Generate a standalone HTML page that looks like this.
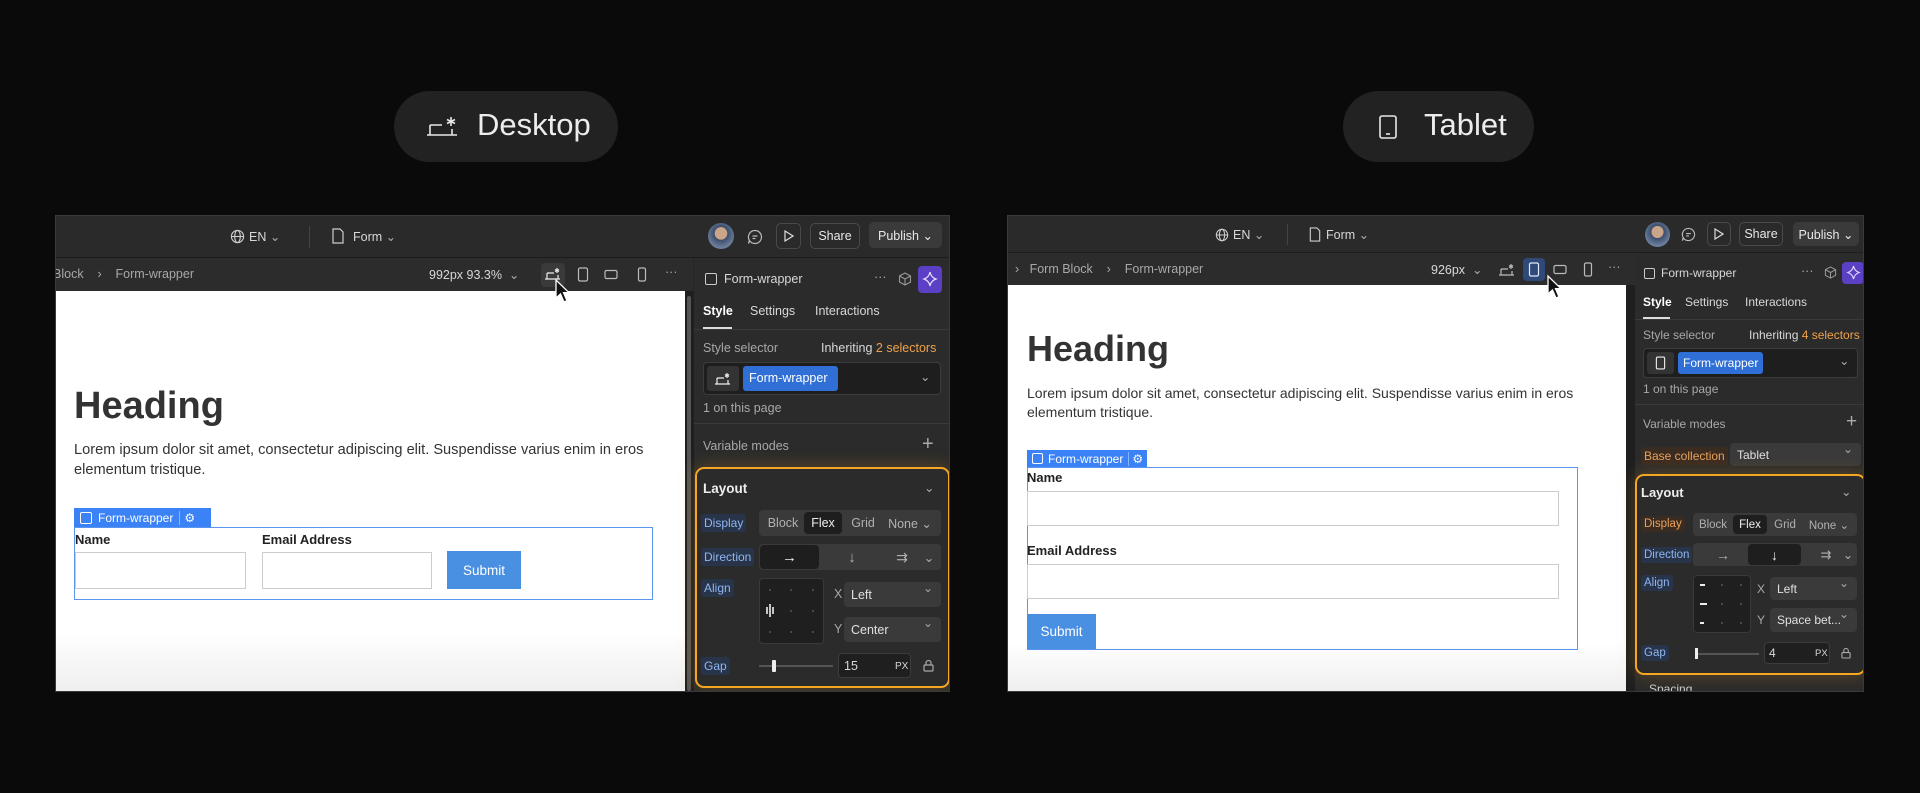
<!DOCTYPE html>
<html><head><meta charset="utf-8"><style>
*{margin:0;padding:0;box-sizing:border-box}
body{width:1920px;height:793px;background:#0a0a0a;position:relative;overflow:hidden;font-family:"Liberation Sans",sans-serif;color:#d6d6d6}
.a{position:absolute}
.pill{position:absolute;background:#222;border-radius:36px;color:#ececec;font-size:31px;display:flex;align-items:center}
.win{position:absolute;background:#262626;border:1px solid #3a3a3a;overflow:hidden}
.bar1{position:absolute;left:0;right:0;top:0;background:#2a2a2a;border-bottom:1px solid #1c1c1c}
.bar2{position:absolute;left:0;background:#2c2c2c}
.t{position:absolute;font-size:12.5px;color:#d8d8d8;white-space:nowrap}
.g{color:#a8a8a8}
.btn{position:absolute;border:1px solid #4a4a4a;border-radius:5px;background:#2a2a2a;font-size:12.5px;color:#e8e8e8;display:flex;align-items:center;justify-content:center}
.canvas{position:absolute;background:#fff;overflow:hidden}
.panel{position:absolute;background:#2b2b2b}
.lbl{position:absolute;font-size:12px;padding:2px 3px;border-radius:3px;background:#28344a;color:#8fb6ee}
.lblo{background:#3b2c22;color:#e9a15a}
.seg{position:absolute;background:#3a3a3a;border-radius:4px;font-size:12.5px;color:#b0b0b0}
.seg span{position:absolute;top:0;bottom:0;display:flex;align-items:center;justify-content:center}
.act{background:#1e1e1e;border-radius:4px;color:#eee}
.sel{position:absolute;background:#3a3a3a;border-radius:4px;font-size:12.5px;color:#e0e0e0;padding-left:7px;display:flex;align-items:center}
.sel:after{content:"⌄";position:absolute;right:8px;top:-1px;color:#aaa;font-size:12px}
.orange{position:absolute;border:2px solid #f5a623;border-radius:9px;box-shadow:0 0 18px rgba(245,166,35,.25)}
.grid9{position:absolute;background:#1f1f1f;border:1px solid #3a3a3a;border-radius:4px}
.inp{position:absolute;border:1px solid #ccc;background:#fff}
.sub{position:absolute;background:#4a90e2;color:#fff;font-size:13.5px;display:flex;align-items:center;justify-content:center}
.fl{position:absolute;font-size:13px;font-weight:bold;color:#222}
.tag{position:absolute;background:#3b82f6;color:#fff;font-size:12px;display:flex;align-items:center}
svg{position:absolute}
</style></head><body>

<div class="pill" style="left:394px;top:91px;width:224px;height:71px">
<svg style="left:32px;top:24px" width="34" height="24" viewBox="0 0 34 24" fill="none" stroke="#e8e8e8" stroke-width="1.6"><path d="M4 10h12M4 10v10M1 20h30M26 20v-6"/><path d="M25 2v9M21 4.5l8 4M29 4.5l-8 4"/></svg>
<span style="position:absolute;left:83px;top:16px">Desktop</span></div>
<div class="pill" style="left:1343px;top:91px;width:191px;height:71px">
<svg style="left:35px;top:24px" width="20" height="24" viewBox="0 0 20 24" fill="none" stroke="#e8e8e8" stroke-width="1.6"><rect x="2" y="1" width="16" height="22" rx="2"/><path d="M8 19h4"/></svg>
<span style="position:absolute;left:81px;top:16px">Tablet</span></div>

<!-- Desktop window -->
<div class="win" style="left:55px;top:215px;width:895px;height:477px">
 <div class="bar1" style="height:42px"></div>
 <svg style="left:174px;top:13px" width="15" height="15" viewBox="0 0 16 16" fill="none" stroke="#ccc" stroke-width="1.2"><circle cx="8" cy="8" r="6.5"/><ellipse cx="8" cy="8" rx="3" ry="6.5"/><path d="M1.5 8h13"/></svg>
 <div class="t" style="left:193px;top:13px">EN <span class="g">⌄</span></div>
 <div class="a" style="left:253px;top:10px;width:1px;height:22px;background:#444"></div>
 <svg style="left:276px;top:12px" width="12" height="16" viewBox="0 0 12 16" fill="none" stroke="#ccc" stroke-width="1.2"><path d="M1 1h7l3 3v11H1z"/></svg>
 <div class="t" style="left:297px;top:13px">Form <span class="g">⌄</span></div>
 <div class="a" style="left:652px;top:7px;width:26px;height:26px;border-radius:50%;background:radial-gradient(circle at 50% 40%,#c9a58a 0 30%,#3b4d6a 32%,#6c7f9c 70%)"></div>
 <svg style="left:691px;top:13px" width="16" height="16" viewBox="0 0 16 16" fill="none" stroke="#bbb" stroke-width="1.2"><path d="M8 1.5a6.5 6.5 0 1 1-5.3 10.3L1.5 14.5l.8-3.3A6.5 6.5 0 0 1 8 1.5z"/><path d="M5.5 7h5M5.5 9.5h3"/></svg>
 <div class="btn" style="left:720px;top:7px;width:25px;height:26px"><svg style="position:static" width="10" height="12" viewBox="0 0 10 12" fill="none" stroke="#ddd" stroke-width="1.2"><path d="M1 1l8 5-8 5z"/></svg></div>
 <div class="btn" style="left:754px;top:7px;width:50px;height:26px">Share</div>
 <div class="btn" style="left:813px;top:6px;width:73px;height:26px;background:#3a3a3a;border-color:#3a3a3a">Publish ⌄</div>
 <div class="bar2" style="top:42px;width:637px;height:33px"></div>
 <div class="t g" style="left:-3px;top:51px">Block &nbsp;&nbsp;&nbsp;›&nbsp;&nbsp;&nbsp; Form-wrapper</div>
 <div class="t" style="left:373px;top:51px">992px 93.3% <span class="g">&nbsp;⌄</span></div>
 <div class="a" style="left:485px;top:47px;width:24px;height:24px;background:#3a3a3a;border-radius:4px"></div>
 <svg style="left:488px;top:51px" width="18" height="14" viewBox="0 0 18 14" fill="none" stroke="#eee" stroke-width="1.2"><path d="M3 6h7M3 6v6M1 12h15M14 12V8"/><path d="M13 1v5M11 2.5l4 2M15 2.5l-4 2"/></svg>
 <svg style="left:521px;top:51px" width="12" height="15" viewBox="0 0 12 15" fill="none" stroke="#bbb" stroke-width="1.2"><rect x="1.5" y="1" width="9" height="13" rx="1.5"/></svg>
 <svg style="left:548px;top:53px" width="14" height="11" viewBox="0 0 14 11" fill="none" stroke="#bbb" stroke-width="1.2"><rect x="1" y="1.5" width="12" height="8" rx="1.5"/></svg>
 <svg style="left:581px;top:51px" width="10" height="15" viewBox="0 0 10 15" fill="none" stroke="#bbb" stroke-width="1.2"><rect x="1.5" y="1" width="7" height="13" rx="1.5"/></svg>
 <div class="t g" style="left:609px;top:49px">···</div>
 <div class="canvas" style="left:0;top:75px;width:629px;height:402px;background:linear-gradient(#fff 85%,#eee)">
  <div class="a" style="left:18px;top:94px;font-size:38px;font-weight:bold;color:#333">Heading</div>
  <div class="a" style="left:18px;top:149px;width:590px;font-size:14.6px;line-height:20px;color:#333">Lorem ipsum dolor sit amet, consectetur adipiscing elit. Suspendisse varius enim in eros elementum tristique.</div>
  <div class="tag" style="left:18px;top:217px;width:137px;height:19px"><span style="display:inline-block;width:12px;height:12px;border:1.3px solid #fff;border-radius:2px;margin:0 6px 0 6px"></span>Form-wrapper<span style="border-left:1px solid #8ab4ff;margin-left:6px;padding-left:4px">⚙</span></div>
  <div class="a" style="left:18px;top:236px;width:579px;height:73px;border:1.5px solid #5b95f0"></div>
  <div class="fl" style="left:19px;top:241px">Name</div>
  <div class="fl" style="left:206px;top:241px">Email Address</div>
  <div class="inp" style="left:19px;top:261px;width:171px;height:37px"></div>
  <div class="inp" style="left:206px;top:261px;width:170px;height:37px"></div>
  <div class="sub" style="left:391px;top:260px;width:74px;height:38px">Submit</div>
 </div>
 <div class="a" style="left:629px;top:75px;width:9px;height:402px;background:#1f1f1f"></div>
 <div class="a" style="left:631px;top:80px;width:4px;height:395px;background:#555;border-radius:2px"></div>
 <svg style="left:498px;top:62px" width="18" height="26" viewBox="0 0 18 26"><path d="M2 2v18l4.5-4 3.5 8 3-1.3-3.5-8H15z" fill="#111" stroke="#fff" stroke-width="1.3"/></svg>
 <div class="panel" style="left:638px;top:42px;width:257px;height:435px">
  <div class="a" style="left:11px;top:15px;width:12px;height:12px;border:1.3px solid #ccc;border-radius:2px"></div>
  <div class="t" style="left:30px;top:14px">Form-wrapper</div>
  <div class="t g" style="left:180px;top:12px">···</div>
  <svg style="left:204px;top:14px" width="14" height="14" viewBox="0 0 14 14" fill="none" stroke="#999" stroke-width="1.1"><path d="M7 1l5.5 3v6L7 13 1.5 10V4z M1.5 4L7 7l5.5-3M7 7v6"/></svg>
  <div class="a" style="left:224px;top:8px;width:24px;height:27px;background:#5b3fc4;border-radius:4px"></div>
  <svg style="left:228px;top:13px" width="16" height="16" viewBox="0 0 16 16" fill="none" stroke="#e6dcff" stroke-width="1.2"><path d="M8 1c.6 3.5 2.5 5.8 6 7-3.5 1.2-5.4 3.5-6 7-.6-3.5-2.5-5.8-6-7 3.5-1.2 5.4-3.5 6-7z"/></svg>
  <div class="t" style="left:9px;top:46px;color:#fff;font-weight:bold">Style</div>
  <div class="t" style="left:56px;top:46px">Settings</div>
  <div class="t" style="left:121px;top:46px">Interactions</div>
  <div class="a" style="left:9px;top:69px;width:29px;height:2px;background:#ddd"></div>
  <div class="a" style="left:0;top:71px;width:257px;height:1px;background:#3a3a3a"></div>
  <div class="t g" style="left:9px;top:83px">Style selector</div>
  <div class="t" style="left:127px;top:83px">Inheriting <span style="color:#f0a14a">2 selectors</span></div>
  <div class="a" style="left:9px;top:104px;width:238px;height:33px;background:#1e1e1e;border:1px solid #3c3c3c;border-radius:4px"></div>
  <div class="a" style="left:13px;top:108px;width:32px;height:25px;background:#333;border-radius:3px"></div>
  <svg style="left:20px;top:114px" width="18" height="14" viewBox="0 0 18 14" fill="none" stroke="#eee" stroke-width="1.2"><path d="M3 6h7M3 6v6M1 12h15M14 12V8"/><path d="M13 1v5M11 2.5l4 2M15 2.5l-4 2"/></svg>
  <div class="a" style="left:49px;top:108px;width:95px;height:25px;background:#2f6fd6;border-radius:3px;color:#fff;font-size:12.5px;padding:5px 0 0 6px">Form-wrapper</div>
  <div class="t g" style="left:226px;top:111px">⌄</div>
  <div class="t g" style="left:9px;top:143px">1 on this page</div>
  <div class="a" style="left:0;top:165px;width:257px;height:1px;background:#3a3a3a"></div>
  <div class="t g" style="left:9px;top:181px">Variable modes</div>
  <div class="t" style="left:228px;top:175px;font-size:20px;color:#aaa">+</div>
 </div>
 <div class="orange" style="left:639px;top:251px;width:255px;height:221px"></div>
</div>
<div class="t" style="left:703px;top:481px;font-size:13.5px;font-weight:bold;color:#eee">Layout</div>
<div class="t g" style="left:924px;top:480px">⌄</div>
<div class="lbl" style="left:701px;top:514px">Display</div>
<div class="seg" style="left:759px;top:510px;width:182px;height:26px"><span style="left:5px;width:38px">Block</span><span class="act" style="left:45px;width:38px;top:2px;bottom:2px">Flex</span><span style="left:86px;width:36px">Grid</span><span style="left:124px;width:54px">None ⌄</span></div>
<div class="lbl" style="left:701px;top:548px">Direction</div>
<div class="seg" style="left:759px;top:544px;width:182px;height:26px"><span class="act" style="left:1px;width:59px;top:1px;bottom:1px;font-size:15px">→</span><span style="left:78px;width:30px;font-size:15px">↓</span><span style="left:128px;width:30px;font-size:14px">⇉</span><span style="left:162px;width:16px">⌄</span></div>
<div class="lbl" style="left:701px;top:579px">Align</div>
<div class="grid9" style="left:759px;top:578px;width:65px;height:66px"></div>
<svg style="left:759px;top:578px" width="65" height="66"><g fill="#666"><circle cx="11" cy="12" r=".9"/><circle cx="32" cy="12" r=".9"/><circle cx="54" cy="12" r=".9"/><circle cx="32" cy="33" r=".9"/><circle cx="54" cy="33" r=".9"/><circle cx="11" cy="54" r=".9"/><circle cx="32" cy="54" r=".9"/><circle cx="54" cy="54" r=".9"/></g><g stroke="#eee" stroke-width="1.6"><path d="M8 29v7M11 26v13M14 29v7"/></g></svg>
<div class="t g" style="left:834px;top:587px">X</div>
<div class="sel" style="left:844px;top:582px;width:97px;height:25px">Left</div>
<div class="t g" style="left:834px;top:622px">Y</div>
<div class="sel" style="left:844px;top:617px;width:97px;height:25px">Center</div>
<div class="lbl" style="left:701px;top:657px">Gap</div>
<div class="a" style="left:759px;top:665px;width:74px;height:2px;background:#555"></div>
<div class="a" style="left:772px;top:660px;width:4px;height:12px;background:#eee;border-radius:1px"></div>
<div class="a" style="left:838px;top:653px;width:73px;height:25px;background:#1f1f1f;border:1px solid #3c3c3c;border-radius:4px"></div>
<div class="t" style="left:844px;top:659px">15</div>
<div class="t" style="left:895px;top:661px;font-size:10px">PX</div>
<svg style="left:923px;top:659px" width="11" height="13" viewBox="0 0 11 13" fill="none" stroke="#aaa" stroke-width="1.2"><rect x="1" y="6" width="9" height="6" rx="1"/><path d="M3 6V4a2.5 2.5 0 0 1 5 0v2"/></svg>

<!-- Tablet window -->
<div class="win" style="left:1007px;top:215px;width:857px;height:477px">
 <div class="bar1" style="height:37px"></div>
 <svg style="left:207px;top:12px" width="14" height="14" viewBox="0 0 16 16" fill="none" stroke="#ccc" stroke-width="1.2"><circle cx="8" cy="8" r="6.5"/><ellipse cx="8" cy="8" rx="3" ry="6.5"/><path d="M1.5 8h13"/></svg>
 <div class="t" style="left:225px;top:11px">EN <span class="g">⌄</span></div>
 <div class="a" style="left:279px;top:8px;width:1px;height:21px;background:#444"></div>
 <svg style="left:301px;top:11px" width="12" height="15" viewBox="0 0 12 16" fill="none" stroke="#ccc" stroke-width="1.2"><path d="M1 1h7l3 3v11H1z"/></svg>
 <div class="t" style="left:318px;top:11px">Form <span class="g">⌄</span></div>
 <div class="a" style="left:637px;top:6px;width:25px;height:25px;border-radius:50%;background:radial-gradient(circle at 50% 40%,#c9a58a 0 30%,#3b4d6a 32%,#6c7f9c 70%)"></div>
 <svg style="left:673px;top:11px" width="15" height="15" viewBox="0 0 16 16" fill="none" stroke="#bbb" stroke-width="1.2"><path d="M8 1.5a6.5 6.5 0 1 1-5.3 10.3L1.5 14.5l.8-3.3A6.5 6.5 0 0 1 8 1.5z"/><path d="M5.5 7h5M5.5 9.5h3"/></svg>
 <div class="btn" style="left:699px;top:6px;width:24px;height:24px"><svg style="position:static" width="10" height="12" viewBox="0 0 10 12" fill="none" stroke="#ddd" stroke-width="1.2"><path d="M1 1l8 5-8 5z"/></svg></div>
 <div class="btn" style="left:731px;top:6px;width:44px;height:24px">Share</div>
 <div class="btn" style="left:785px;top:6px;width:66px;height:24px;background:#3a3a3a;border-color:#3a3a3a">Publish ⌄</div>
 <div class="bar2" style="top:37px;width:627px;height:32px"></div>
 <div class="t g" style="left:7px;top:46px">› &nbsp;&nbsp;Form Block &nbsp;&nbsp;&nbsp;›&nbsp;&nbsp;&nbsp; Form-wrapper</div>
 <div class="t" style="left:423px;top:46px">926px <span class="g">&nbsp;⌄</span></div>
 <svg style="left:490px;top:47px" width="18" height="14" viewBox="0 0 18 14" fill="none" stroke="#bbb" stroke-width="1.2"><path d="M3 6h7M3 6v6M1 12h15M14 12V8"/><path d="M13 1v5M11 2.5l4 2M15 2.5l-4 2"/></svg>
 <div class="a" style="left:515px;top:42px;width:22px;height:23px;background:#2f4a78;border-radius:4px"></div>
 <svg style="left:520px;top:46px" width="12" height="15" viewBox="0 0 12 15" fill="none" stroke="#dfe9ff" stroke-width="1.2"><rect x="1.5" y="1" width="9" height="13" rx="1.5"/></svg>
 <svg style="left:545px;top:48px" width="14" height="11" viewBox="0 0 14 11" fill="none" stroke="#bbb" stroke-width="1.2"><rect x="1" y="1.5" width="12" height="8" rx="1.5"/></svg>
 <svg style="left:575px;top:46px" width="10" height="15" viewBox="0 0 10 15" fill="none" stroke="#bbb" stroke-width="1.2"><rect x="1.5" y="1" width="7" height="13" rx="1.5"/></svg>
 <div class="t g" style="left:600px;top:44px">···</div>
 <div class="canvas" style="left:0;top:69px;width:618px;height:408px;background:linear-gradient(#fff 88%,#eee)">
  <div class="a" style="left:19px;top:43px;font-size:36px;font-weight:bold;color:#333">Heading</div>
  <div class="a" style="left:19px;top:99px;width:580px;font-size:14px;line-height:19px;color:#333">Lorem ipsum dolor sit amet, consectetur adipiscing elit. Suspendisse varius enim in eros elementum tristique.</div>
  <div class="tag" style="left:19px;top:165px;width:120px;height:17px"><span style="display:inline-block;width:11px;height:11px;border:1.3px solid #fff;border-radius:2px;margin:0 5px 0 5px"></span>Form-wrapper<span style="border-left:1px solid #8ab4ff;margin-left:5px;padding-left:3px">⚙</span></div>
  <div class="a" style="left:19px;top:182px;width:551px;height:183px;border:1.5px solid #5b95f0"></div>
  <div class="fl" style="left:19px;top:185px">Name</div>
  <div class="inp" style="left:19px;top:206px;width:532px;height:35px"></div>
  <div class="fl" style="left:19px;top:258px">Email Address</div>
  <div class="inp" style="left:19px;top:279px;width:532px;height:35px"></div>
  <div class="sub" style="left:19px;top:329px;width:69px;height:35px">Submit</div>
 </div>
 <svg style="left:538px;top:58px" width="18" height="26" viewBox="0 0 18 26"><path d="M2 2v18l4.5-4 3.5 8 3-1.3-3.5-8H15z" fill="#111" stroke="#fff" stroke-width="1.3"/></svg>
 <div class="a" style="left:618px;top:69px;width:9px;height:408px;background:#1f1f1f"></div>
 <div class="panel" style="left:627px;top:37px;width:230px;height:440px">
  <div class="a" style="left:9px;top:15px;width:11px;height:11px;border:1.3px solid #ccc;border-radius:2px"></div>
  <div class="t" style="left:26px;top:13px;font-size:12px">Form-wrapper</div>
  <div class="t g" style="left:166px;top:11px">···</div>
  <svg style="left:189px;top:13px" width="13" height="13" viewBox="0 0 14 14" fill="none" stroke="#999" stroke-width="1.1"><path d="M7 1l5.5 3v6L7 13 1.5 10V4z M1.5 4L7 7l5.5-3M7 7v6"/></svg>
  <div class="a" style="left:207px;top:9px;width:22px;height:22px;background:#5b3fc4;border-radius:4px"></div>
  <svg style="left:211px;top:12px" width="15" height="15" viewBox="0 0 16 16" fill="none" stroke="#e6dcff" stroke-width="1.2"><path d="M8 1c.6 3.5 2.5 5.8 6 7-3.5 1.2-5.4 3.5-6 7-.6-3.5-2.5-5.8-6-7 3.5-1.2 5.4-3.5 6-7z"/></svg>
  <div class="t" style="left:8px;top:42px;font-size:12px;color:#fff;font-weight:bold">Style</div>
  <div class="t" style="left:50px;top:42px;font-size:12px">Settings</div>
  <div class="t" style="left:110px;top:42px;font-size:12px">Interactions</div>
  <div class="a" style="left:8px;top:64px;width:27px;height:2px;background:#ddd"></div>
  <div class="a" style="left:0;top:66px;width:230px;height:1px;background:#3a3a3a"></div>
  <div class="t g" style="left:8px;top:75px;font-size:12px">Style selector</div>
  <div class="t" style="left:114px;top:75px;font-size:12px">Inheriting <span style="color:#f0a14a">4 selectors</span></div>
  <div class="a" style="left:8px;top:95px;width:215px;height:30px;background:#1e1e1e;border:1px solid #3c3c3c;border-radius:4px"></div>
  <div class="a" style="left:12px;top:99px;width:27px;height:22px;background:#333;border-radius:3px"></div>
  <svg style="left:20px;top:103px" width="11" height="14" viewBox="0 0 12 15" fill="none" stroke="#eee" stroke-width="1.2"><rect x="1.5" y="1" width="9" height="13" rx="1.5"/></svg>
  <div class="a" style="left:43px;top:99px;width:85px;height:22px;background:#2f6fd6;border-radius:3px;color:#fff;font-size:12px;padding:4px 0 0 5px">Form-wrapper</div>
  <div class="t g" style="left:204px;top:100px">⌄</div>
  <div class="t g" style="left:8px;top:129px;font-size:12px">1 on this page</div>
  <div class="a" style="left:0;top:151px;width:230px;height:1px;background:#3a3a3a"></div>
  <div class="t g" style="left:8px;top:164px;font-size:12px">Variable modes</div>
  <div class="t" style="left:211px;top:158px;font-size:19px;color:#aaa">+</div>
  <div class="lbl lblo" style="left:6px;top:194px;font-size:12px">Base collection</div>
  <div class="sel" style="left:95px;top:190px;width:131px;height:23px;font-size:12px">Tablet</div>
 </div>
 <div class="orange" style="left:627px;top:258px;width:231px;height:201px"></div>
 <div class="t" style="left:641px;top:466px;font-size:12px;color:#ccc">Spacing</div>
</div>
<div class="t" style="left:1641px;top:485px;font-size:13px;font-weight:bold;color:#eee">Layout</div>
<div class="t g" style="left:1841px;top:484px">⌄</div>
<div class="lbl lblo" style="left:1641px;top:516px;font-size:11.5px">Display</div>
<div class="seg" style="left:1693px;top:513px;width:164px;height:23px;font-size:11.5px"><span style="left:3px;width:34px">Block</span><span class="act" style="left:40px;width:34px;top:2px;bottom:2px">Flex</span><span style="left:76px;width:32px">Grid</span><span style="left:110px;width:52px">None ⌄</span></div>
<div class="lbl" style="left:1641px;top:547px;font-size:11.5px">Direction</div>
<div class="seg" style="left:1693px;top:543px;width:164px;height:23px"><span style="left:15px;width:30px;font-size:14px">→</span><span class="act" style="left:55px;width:53px;top:1px;bottom:1px;font-size:14px">↓</span><span style="left:118px;width:30px;font-size:13px">⇉</span><span style="left:148px;width:14px">⌄</span></div>
<div class="lbl" style="left:1641px;top:575px;font-size:11.5px">Align</div>
<div class="grid9" style="left:1693px;top:575px;width:58px;height:58px"></div>
<svg style="left:1693px;top:575px" width="58" height="58"><g fill="#666"><circle cx="29" cy="10" r=".9"/><circle cx="48" cy="10" r=".9"/><circle cx="29" cy="29" r=".9"/><circle cx="48" cy="29" r=".9"/><circle cx="29" cy="48" r=".9"/><circle cx="48" cy="48" r=".9"/></g><g stroke="#eee" stroke-width="2"><path d="M7 10h5M7 29h7M7 48h4"/></g></svg>
<div class="t g" style="left:1757px;top:582px;font-size:12px">X</div>
<div class="sel" style="left:1770px;top:577px;width:87px;height:23px;font-size:12px">Left</div>
<div class="t g" style="left:1757px;top:613px;font-size:12px">Y</div>
<div class="sel" style="left:1770px;top:608px;width:87px;height:24px;font-size:12px">Space bet...</div>
<div class="lbl" style="left:1641px;top:645px;font-size:11.5px">Gap</div>
<div class="a" style="left:1695px;top:653px;width:64px;height:2px;background:#555"></div>
<div class="a" style="left:1695px;top:648px;width:3px;height:11px;background:#eee"></div>
<div class="a" style="left:1764px;top:642px;width:66px;height:22px;background:#1f1f1f;border:1px solid #3c3c3c;border-radius:4px"></div>
<div class="t" style="left:1769px;top:646px;font-size:12px">4</div>
<div class="t" style="left:1815px;top:648px;font-size:9.5px">PX</div>
<svg style="left:1841px;top:647px" width="10" height="12" viewBox="0 0 11 13" fill="none" stroke="#aaa" stroke-width="1.2"><rect x="1" y="6" width="9" height="6" rx="1"/><path d="M3 6V4a2.5 2.5 0 0 1 5 0v2"/></svg>
</body></html>
